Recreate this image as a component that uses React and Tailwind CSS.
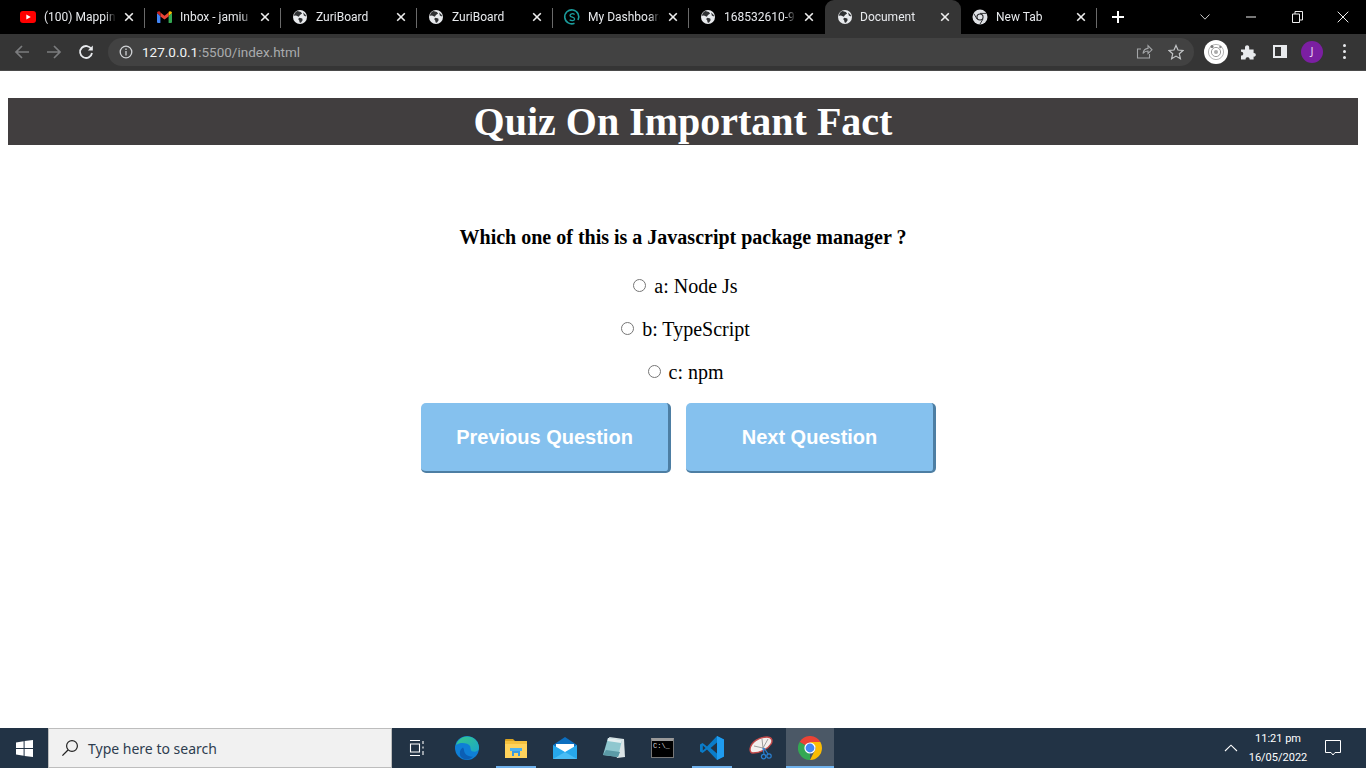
import React from "react";

const Globe = () => (
  <svg width="14" height="14" viewBox="0 0 16 16" className="shrink-0">
    <circle cx="8" cy="8" r="8" fill="#e8eaed" />
    <path d="M5 1.2 9 2.2 10.4 4 8 5.6 6.6 7.8 3.4 6.4 1 6.6C1.4 4 3 2.2 5 1.2ZM7.4 8.8 10.6 9.6 11 11.6 9 14.6 7.6 14.4 7 11.6 5.8 10.4ZM11.6 2.8 14.8 6 14.6 7.4 12.4 6.4Z" fill="#2f3133" />
  </svg>
);

const Youtube = () => (
  <svg width="16" height="12" viewBox="0 0 16 12" className="shrink-0">
    <rect width="16" height="12" rx="3" fill="#f00" />
    <path d="M6.3 3.4 10.8 6 6.3 8.6Z" fill="#fff" />
  </svg>
);

const Gmail = () => (
  <svg width="15" height="12" viewBox="0 0 15 12" className="shrink-0">
    <path d="M0 2V11a1 1 0 0 0 1 1h2.4V5Z" fill="#4285f4" />
    <path d="M15 2V11a1 1 0 0 1-1 1h-2.4V5Z" fill="#34a853" />
    <path d="M3.4 1.6 7.5 4.8 11.6 1.6V5.4L7.5 8.4 3.4 5.4Z" fill="#ea4335" />
    <path d="M0 2C0 .6 1.6-.4 2.8.6L3.4 1.1V5Z" fill="#c5221f" />
    <path d="M15 2c0-1.4-1.6-2.4-2.8-1.4l-.6.5V5Z" fill="#fbbc04" />
  </svg>
);

const DashIcon = () => (
  <svg width="18" height="18" viewBox="0 0 18 18" className="shrink-0">
    <path d="M11.5 15.3A7 7 0 1 1 15 12" fill="none" stroke="#1b9c9c" strokeWidth="1.6" />
    <path d="M11.6 6.4C10 5.2 7 5.6 7 7.5 7 9.8 11.6 8.6 11.6 11 11.6 13 8.4 13.2 6.6 11.8" fill="none" stroke="#1b9c9c" strokeWidth="1.3" />
  </svg>
);

const ChromeMono = () => (
  <svg width="16" height="16" viewBox="0 0 16 16" className="shrink-0">
    <circle cx="8" cy="8" r="7.5" fill="#dfe1e5" />
    <circle cx="8" cy="8" r="3.6" fill="#202124" />
    <circle cx="8" cy="8" r="2.5" fill="#dfe1e5" />
    <path d="M8 4.4H14.4M5 10 1.8 4.6M10.9 10.2 7.8 15.4" stroke="#202124" strokeWidth="0.9" />
  </svg>
);

const CloseX = () => (
  <svg width="10" height="10" viewBox="0 0 10 10" className="shrink-0">
    <path d="M1.2 1.2 8.8 8.8M8.8 1.2 1.2 8.8" stroke="#eee" strokeWidth="1.6" />
  </svg>
);

const tabs = [
  { icon: <Youtube />, title: "(100) Mapping", sep: true },
  { icon: <Gmail />, title: "Inbox - jamiu", sep: true },
  { icon: <Globe />, title: "ZuriBoard", sep: true },
  { icon: <Globe />, title: "ZuriBoard", sep: true },
  { icon: <DashIcon />, title: "My Dashboard", sep: true },
  { icon: <Globe />, title: "168532610-97", sep: false },
  { icon: <Globe />, title: "Document", active: true, sep: false },
  { icon: <ChromeMono />, title: "New Tab", sep: true },
];

function Tab({ icon, title, active, sep }) {
  return (
    <div
      className={
        active
          ? "w-[136px] h-[34px] ml-[1px] -mr-[1px] shrink-0 flex items-center rounded-t-[9px] bg-[#353535]"
          : "w-[136px] h-[34px] shrink-0 flex items-center relative"
      }
    >
      <div className={active ? "w-[35px] shrink-0 flex justify-center pl-[4px]" : "w-[36px] shrink-0 flex justify-center pl-[4px]"}>{icon}</div>
      <div className="w-[72px] overflow-hidden whitespace-nowrap text-[12px] font-['Roboto',sans-serif] text-[#e8eaed] [mask-image:linear-gradient(to_right,black_85%,transparent)]">
        {title}
      </div>
      <div className="ml-[8px] flex">
        <CloseX />
      </div>
      {sep && <span className="absolute right-[-1px] top-[8px] h-[20px] w-px bg-[#6a6a6a]" />}
    </div>
  );
}

function TabStrip() {
  return (
    <div className="h-[34px] bg-black flex items-center pl-[8px]">
      {tabs.map((t, i) => (
        <Tab key={i} {...t} />
      ))}
      <div className="w-[44px] flex justify-center">
        <svg width="14" height="14" viewBox="0 0 14 14">
          <path d="M7 1V13M1 7H13" stroke="#fff" strokeWidth="2" />
        </svg>
      </div>
      <div className="ml-auto flex items-center text-[#dcdcdc]">
        <div className="w-[46px] flex justify-center">
          <svg width="12" height="8" viewBox="0 0 12 8">
            <path d="M1.5 1.5 6 6.2 10.5 1.5" fill="none" stroke="#ccc" strokeWidth="1" />
          </svg>
        </div>
        <div className="w-[46px] flex justify-center">
          <svg width="10" height="10" viewBox="0 0 10 10">
            <path d="M0 5H10" stroke="#eee" strokeWidth="1" />
          </svg>
        </div>
        <div className="w-[46px] flex justify-center">
          <svg width="11" height="12" viewBox="0 0 11 12">
            <path d="M.5 3H7.5V11.5H.5ZM3 3V.5H10.5V9H7.5" fill="none" stroke="#eee" strokeWidth="1" />
          </svg>
        </div>
        <div className="w-[46px] flex justify-center">
          <svg width="12" height="12" viewBox="0 0 12 12">
            <path d="M.7 .7 11.3 11.3M11.3 .7 .7 11.3" stroke="#eee" strokeWidth="1" />
          </svg>
        </div>
      </div>
    </div>
  );
}

function Toolbar() {
  return (
    <div className="h-[37px] bg-[#353535] border-b border-b-[#4a4a4a] flex items-center pb-[1px]">
      <div className="w-[108px] shrink-0 flex items-center pl-[14px]">
        <svg width="16" height="16" viewBox="0 0 16 16">
          <path d="M15 8H2M8 2 2 8l6 6" fill="none" stroke="#7b7c7e" strokeWidth="1.7" />
        </svg>
        <svg width="16" height="16" viewBox="0 0 16 16" className="ml-[16px]">
          <path d="M1 8H14M8 2l6 6-6 6" fill="none" stroke="#7b7c7e" strokeWidth="1.7" />
        </svg>
        <svg width="16" height="16" viewBox="0 0 16 16" className="ml-[16px]">
          <path d="M13.4 5.2A6 6 0 1 0 14 9" fill="none" stroke="#e8eaed" strokeWidth="1.8" />
          <path d="M14.8 1.6V6.6H9.8Z" fill="#e8eaed" />
        </svg>
      </div>
      <div className="w-[1086px] h-[28px] shrink-0 rounded-[14px] bg-[#424242] flex items-center pl-[11px] pr-[10px]">
        <svg width="14" height="14" viewBox="0 0 14 14" className="shrink-0">
          <circle cx="7" cy="7" r="5.8" fill="none" stroke="#d0d2d5" strokeWidth="1.3" />
          <path d="M7 6V10.4M7 3.6V5" stroke="#d0d2d5" strokeWidth="1.3" />
        </svg>
        <div className="ml-[9px] pt-[1px] text-[13.5px] font-['Roboto',sans-serif] text-[#a9abad]">
          <span className="text-[#f1f3f4]">127.0.0.1</span>:5500/index.html
        </div>
        <div className="ml-auto flex items-center gap-[15px]">
          <svg width="17" height="17" viewBox="0 0 17 17">
            <path d="M13.5 11V15H1.5V6H5M7 10.5C7.4 7.5 9.4 5.6 12 5.4V2.6L16 6.8 12 10.4V8C10 8 8.2 8.8 7 10.5Z" fill="none" stroke="#a3a5a7" strokeWidth="1.1" />
          </svg>
          <svg width="16" height="16" viewBox="0 0 16 16">
            <path d="M8 1.4 10 6 15 6.5 11.3 9.8 12.4 14.7 8 12.1 3.6 14.7 4.7 9.8 1 6.5 6 6Z" fill="none" stroke="#c4c6c8" strokeWidth="1.2" />
          </svg>
        </div>
      </div>
      <div className="flex-1 flex items-center pl-[10px]">
        <svg width="24" height="24" viewBox="0 0 24 24" className="shrink-0">
          <circle cx="12" cy="12" r="12" fill="#fff" />
          <circle cx="12" cy="12" r="7.6" fill="none" stroke="#b5b5b5" strokeWidth="1" />
          <circle cx="12" cy="12" r="4.6" fill="none" stroke="#9a9a9a" strokeWidth="1" />
          <circle cx="12" cy="12" r="2" fill="#aaa" />
          <circle cx="8" cy="6.6" r="1.5" fill="#777" />
          <circle cx="16.4" cy="7" r="1.2" fill="#888" />
        </svg>
        <svg width="16" height="16" viewBox="0 0 16 16" className="ml-[12px] shrink-0">
          <path d="M1 5.4H5V3.4C5 .6 9.2 .6 9.2 3.4V5.4H13.6V9C16.6 8.7 16.6 13 13.6 12.6V15.4H9.6C9.8 12.6 5.4 12.6 5.6 15.4H1V11.6C4 12 4 7.4 1 7.8Z" fill="#e8eaed" />
        </svg>
        <div className="ml-[17px] w-[14px] h-[13px] shrink-0 border-2 border-[#e8eaed] border-r-[6px]" />
        <div className="ml-[14px] w-[22px] h-[22px] shrink-0 rounded-full bg-[#7b1fa2] flex items-center justify-center text-[11px] text-[#e9d7f0]">
          J
        </div>
        <div className="ml-[20px] flex flex-col gap-[3px] shrink-0">
          <span className="w-[3px] h-[3px] rounded-full bg-[#e8eaed]" />
          <span className="w-[3px] h-[3px] rounded-full bg-[#e8eaed]" />
          <span className="w-[3px] h-[3px] rounded-full bg-[#e8eaed]" />
        </div>
      </div>
    </div>
  );
}

function Option({ label }) {
  return (
    <label className="h-[43px] flex items-center justify-center text-[20px] text-black">
      <input type="radio" name="q" className="w-[13px] h-[13px] ml-[5px] mr-[8px]" />
      <span>{label}</span>
    </label>
  );
}

function QuizButton({ children }) {
  return (
    <button className="w-[250px] h-[70px] rounded-[5px] bg-[#85c1ee] border-r-[3px] border-b-2 border-r-[#4d7ea3] border-b-[#4d7ea3] text-white font-bold text-[20px] font-['Liberation_Sans',sans-serif]">
      {children}
    </button>
  );
}

function Page() {
  return (
    <main className="flex-1 bg-white font-['Liberation_Serif',serif] pt-[27px]">
      <h1 className="mx-[8px] h-[47px] bg-[#413e3f] text-white text-center font-bold text-[40px] leading-[47px]">
        Quiz On Important Fact
      </h1>
      <p className="mt-[80px] text-center font-bold text-[20px] leading-[24px] text-black">
        Which one of this is a Javascript package manager ?
      </p>
      <div className="mt-[15px] flex flex-col">
        <Option label="a: Node Js" />
        <Option label="b: TypeScript" />
        <Option label="c: npm" />
      </div>
      <div className="mt-[10px] flex justify-center gap-[15px] pr-[9px]">
        <QuizButton>Previous Question</QuizButton>
        <QuizButton>Next Question</QuizButton>
      </div>
    </main>
  );
}

const Edge = () => (
  <svg width="24" height="24" viewBox="0 0 24 24">
    <defs>
      <linearGradient id="eg" x1="0" y1="0" x2="1" y2="1">
        <stop offset="0" stopColor="#37c98a" />
        <stop offset="1" stopColor="#1aa5c9" />
      </linearGradient>
    </defs>
    <circle cx="12" cy="12" r="12" fill="#0f7fd6" />
    <path d="M1 9C3 2 10-1 16 1 21 3 24 7 24 12 24 15 21 16 18 15.6 15 15 16 12 15 10 13 6.6 5 5.6 1 9Z" fill="url(#eg)" />
    <path d="M9 14C9 18 13 21 18 20.6 15 24 9 24.6 6 21 3.6 18 5 13 8 11.6 8.6 12.4 9 13 9 14Z" fill="#0b5fb5" />
  </svg>
);

const Explorer = () => (
  <svg width="24" height="22" viewBox="0 0 24 22">
    <path d="M1 3a1 1 0 0 1 1-1h7l2 2H1Z" fill="#d9a21f" />
    <rect x="1" y="4" width="22" height="17" fill="#ffd35c" />
    <rect x="1" y="4" width="22" height="3" fill="#f5c13e" />
    <path d="M8 19V14H16V19H14V16H10V19Z" fill="#3a9be0" />
    <rect x="6" y="11" width="12" height="3" fill="#4db1ee" />
  </svg>
);

const Mail = () => (
  <svg width="24" height="24" viewBox="0 0 24 24">
    <path d="M12 1 24 9V23H0V9Z" fill="#0c6fc0" />
    <path d="M3 8H21V13L12 17 3 13Z" fill="#fff" />
    <path d="M0 9 12 16 24 9V23H0Z" fill="#27a8ec" />
    <path d="M0 23 12 16 24 23Z" fill="#49bdf5" />
  </svg>
);

const Notes = () => (
  <svg width="24" height="24" viewBox="0 0 24 24">
    <path d="M7 1 22 3 23 21 15 22Z" fill="#dbe4e6" />
    <path d="M6 2 20 4 16 21 1 19Z" fill="#8fc7cf" />
    <path d="M6 2 20 4 19 7 5.4 5Z" fill="#e4eef0" />
    <path d="M1 19 16 21 18 16 4 14Z" fill="#5b9aa6" />
  </svg>
);

const Cmd = () => (
  <div className="w-[23px] h-[20px] bg-black border border-[#777] border-t-[3px] border-t-[#9a9a9a] font-['Liberation_Mono',monospace] text-[7px] leading-[10px] text-[#ddd] pl-[1px]">
    C:\_
  </div>
);

const VSCode = () => (
  <svg width="24" height="24" viewBox="0 0 24 24">
    <path d="M17 0 24 3.4V20.6L17 24 7 13.6 2.6 17 0 15.6V8.4L2.6 7 7 10.4Z" fill="#0a7cc9" />
    <path d="M17 0 24 3.4V20.6L17 24Z" fill="#1f9cf0" />
    <path d="M17 6.6 10.6 12 17 17.4Z" fill="#223345" />
    <path d="M2.8 9.6 5.6 12 2.8 14.4Z" fill="#223345" />
  </svg>
);

const Snip = () => (
  <svg width="24" height="24" viewBox="0 0 24 24">
    <path d="M1 13C2 6 10 1 18 1 23 1 24 5 22 8 19 13 11 17 4 17 2 17 1 15 1 13Z" fill="#f4f0ee" stroke="#c44a4a" strokeWidth="1.4" />
    <path d="M13 3 14 12M19 3 14 12M5 10 14 12" stroke="#888" strokeWidth="0.8" />
    <path d="M14 12 15 18M15 12 19 18" stroke="#2a7fd0" strokeWidth="1.2" />
    <circle cx="14.6" cy="20.6" r="2.2" fill="none" stroke="#2a7fd0" strokeWidth="1.2" />
    <circle cx="20" cy="20" r="2.2" fill="none" stroke="#2a7fd0" strokeWidth="1.2" />
  </svg>
);

const ChromeColor = () => (
  <svg width="24" height="24" viewBox="0 0 24 24">
    <path d="M12 12 1.6 6A12 12 0 0 1 22.4 6Z" fill="#ea4335" />
    <path d="M12 12 1.6 6A12 12 0 0 0 12 24Z" fill="#34a853" />
    <path d="M12 12H24A12 12 0 0 1 12 24L18 12Z" fill="#fbbc04" />
    <path d="M12 6H22.4A12 12 0 0 1 24 12H18Z" fill="#fbbc04" />
    <circle cx="12" cy="12" r="5.6" fill="#fff" />
    <circle cx="12" cy="12" r="4.4" fill="#4285f4" />
  </svg>
);

function TaskIcon({ children, underline, active }) {
  return (
    <div className={active ? "w-[48px] h-full ml-[1px] shrink-0 flex items-center justify-center relative bg-[#4b5866]" : "w-[49px] h-full shrink-0 flex items-center justify-center relative"}>
      {children}
      {underline && <span className={active ? "absolute bottom-0 left-0 right-0 h-[2px] bg-[#6fb1ec]" : "absolute bottom-0 left-[5px] right-[4px] h-[2px] bg-[#6fb1ec]"} />}
    </div>
  );
}

function Taskbar() {
  return (
    <div className="h-[40px] bg-[#223345] flex items-center font-['Noto_Sans',sans-serif]">
      <div className="w-[48px] h-full shrink-0 flex items-center justify-center">
        <svg width="17" height="17" viewBox="0 0 17 17">
          <path d="M0 2.4 7.6 1.3V8H0ZM8.6 1.1 17 0V8H8.6ZM0 9H7.6V15.7L0 14.6ZM8.6 9H17V17L8.6 15.9Z" fill="#fff" />
        </svg>
      </div>
      <div className="w-[344px] h-full shrink-0 bg-[#f1f1f1] border border-[#bdbdbd] flex items-center pl-[12px]">
        <svg width="18" height="18" viewBox="0 0 18 18" className="shrink-0">
          <circle cx="11" cy="7" r="5.4" fill="none" stroke="#222" strokeWidth="1.2" />
          <path d="M7 11 1.4 16.6" stroke="#222" strokeWidth="1.3" />
        </svg>
        <span className="ml-[9px] text-[14px] text-[#2e3d4f]">Type here to search</span>
      </div>
      <div className="w-[50px] h-full shrink-0 flex items-center justify-center">
        <svg width="17" height="16" viewBox="0 0 17 16">
          <path d="M1 .5H11M1 15.5H11M1.5 4H10.5V12H1.5ZM14 1V4M14 6.5V8.5M14 11V15" fill="none" stroke="#fff" strokeWidth="1.1" />
        </svg>
      </div>
      <TaskIcon><Edge /></TaskIcon>
      <TaskIcon underline><Explorer /></TaskIcon>
      <TaskIcon><Mail /></TaskIcon>
      <TaskIcon><Notes /></TaskIcon>
      <TaskIcon><Cmd /></TaskIcon>
      <TaskIcon underline><VSCode /></TaskIcon>
      <TaskIcon><Snip /></TaskIcon>
      <TaskIcon underline active><ChromeColor /></TaskIcon>
      <div className="ml-auto flex items-center h-full">
        <svg width="14" height="8" viewBox="0 0 14 8" className="shrink-0">
          <path d="M1 7 7 1.2 13 7" fill="none" stroke="#fff" strokeWidth="1.1" />
        </svg>
        <div className="ml-[5px] w-[70px] text-center text-[11px] leading-[19px] text-white font-['Roboto',sans-serif]">
          <div>11:21 pm</div>
          <div>16/05/2022</div>
        </div>
        <div className="ml-[12px] mr-[25px]">
          <svg width="16" height="16" viewBox="0 0 16 16">
            <path d="M.5 .5H15.5V12.5H10L8 15 6 12.5H.5Z" fill="none" stroke="#fff" strokeWidth="1" />
          </svg>
        </div>
      </div>
    </div>
  );
}

export default function App() {
  return (
    <div className="h-screen w-full flex flex-col overflow-hidden font-['Noto_Sans',sans-serif]">
      <TabStrip />
      <Toolbar />
      <Page />
      <Taskbar />
    </div>
  );
}
